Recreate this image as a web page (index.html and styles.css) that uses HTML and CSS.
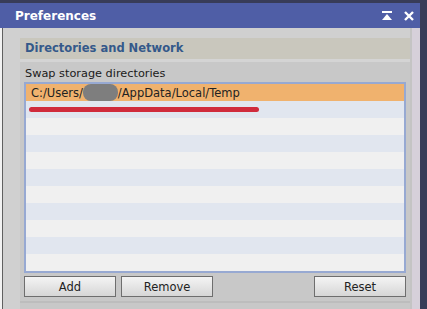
FILE: index.html
```html
<!DOCTYPE html>
<html lang="en">
<head>
<meta charset="UTF-8">
<meta name="viewport" content="width=device-width, initial-scale=1.0">
<title>Preferences</title>
<link rel="stylesheet" href="styles.css">
</head>
<body>

<div class="window">
  <div class="titlebar">
    <span class="title">Preferences</span>
    <div class="tools">
      <svg width="10" height="9" viewBox="0 0 10 9"><rect x="0" y="0" width="10" height="2" fill="#fff"/><path d="M5 3 L10 9 L0 9 Z" fill="#fff"/></svg>
      <svg width="10" height="10" viewBox="0 0 10 10"><path d="M1 1 L9 9 M9 1 L1 9" stroke="#fff" stroke-width="2.4"/></svg>
    </div>
  </div>
  <div class="body">
    <div class="side"></div>
    <div class="main">
      <div class="panel">
        <div class="section-head">Directories and Network</div>
        <div class="label">Swap storage directories</div>
        <div class="list">
          <div class="row selected">C:/Users/<span class="blur"></span>/AppData/Local/Temp</div>
          <div class="row"><span class="mark"></span></div>
          <div class="row"></div>
          <div class="row"></div>
          <div class="row"></div>
          <div class="row"></div>
          <div class="row"></div>
          <div class="row"></div>
          <div class="row"></div>
          <div class="row"></div>
          <div class="row"></div>
        </div>
        <div class="buttons">
          <button class="btn">Add</button>
          <button class="btn">Remove</button>
          <span class="spacer"></span>
          <button class="btn">Reset</button>
        </div>
        <div class="foot"></div>
      </div>
    </div>
    <div class="edge"></div>
  </div>
</div>

</body>
</html>
```

FILE: styles.css
```css
body {
  margin: 0;
  background-color: #383c58;
  font-family: "DejaVu Sans", Verdana, sans-serif;
  overflow: hidden;
}
.window {
  width: 420px;
  height: 309px;
  display: flex;
  flex-direction: column;
}
.titlebar {
  margin-top: 3px;
  height: 25px;
  background-color: #4f5ea6;
  display: flex;
  align-items: center;
  padding: 0 6px 0 15px;
}
.title {
  color: #fff;
  font-weight: bold;
  font-size: 12px;
  flex: 1;
}
.tools {
  display: flex;
  align-items: center;
  gap: 12px;
}
.body {
  flex: 1;
  display: flex;
  background-color: #d0d0d0;
}
.side {
  width: 2px;
  background-color: #f2f2f2;
  border-right: 1px solid #606060;
}
.main {
  flex: 1;
  padding: 10px 0 0 17px;
}
.edge {
  width: 8px;
  background-color: #d6d0da;
  border-left: 2px solid #c4c4c4;
}
.panel {
  background-color: #c8c8c8;
  height: 100%;
}
.section-head {
  height: 21px;
  line-height: 21px;
  background-color: #c9c7bd;
  color: #34598a;
  font-weight: bold;
  font-size: 11.5px;
  padding-left: 5px;
  border-bottom: 3px solid #d4d4d4;
}
.label {
  font-size: 11.3px;
  line-height: 15px;
  color: #1a1a1a;
  padding: 4px 0 0 5px;
  height: 16px;
}
.list {
  margin: 0 4px 0 4px;
  border: 2px solid #97a9d2;
  height: 187px;
  background-color: #f0f0f0;
  overflow: hidden;
}
.row {
  height: 17px;
  font-size: 11.5px;
  color: #222;
  padding-left: 5px;
  display: flex;
  align-items: center;
}
.row:nth-child(even) {
  background-color: #e1e6ef;
}
.row.selected {
  background-color: #f0b26e;
}
.blur {
  display: inline-block;
  width: 35px;
  height: 17px;
  border-radius: 8px;
  background-color: #7e7e7e;
}
.mark {
  display: block;
  width: 230px;
  height: 5px;
  border-radius: 3px;
  background-color: #d02b3c;
  margin-left: -2px;
}
.buttons {
  display: flex;
  gap: 5px;
  margin: 3px 4px 0 4px;
}
.spacer {
  flex: 1;
}
.btn {
  width: 92px;
  height: 21px;
  border: 1px solid #6e6e6e;
  background: linear-gradient(#f4f4f4, #d6d6d6);
  font-family: "DejaVu Sans", Verdana, sans-serif;
  font-size: 11.5px;
  color: #222;
  padding: 0;
}
.foot {
  margin-top: 4px;
  border-top: 2px solid #bdbdbd;
}
```
